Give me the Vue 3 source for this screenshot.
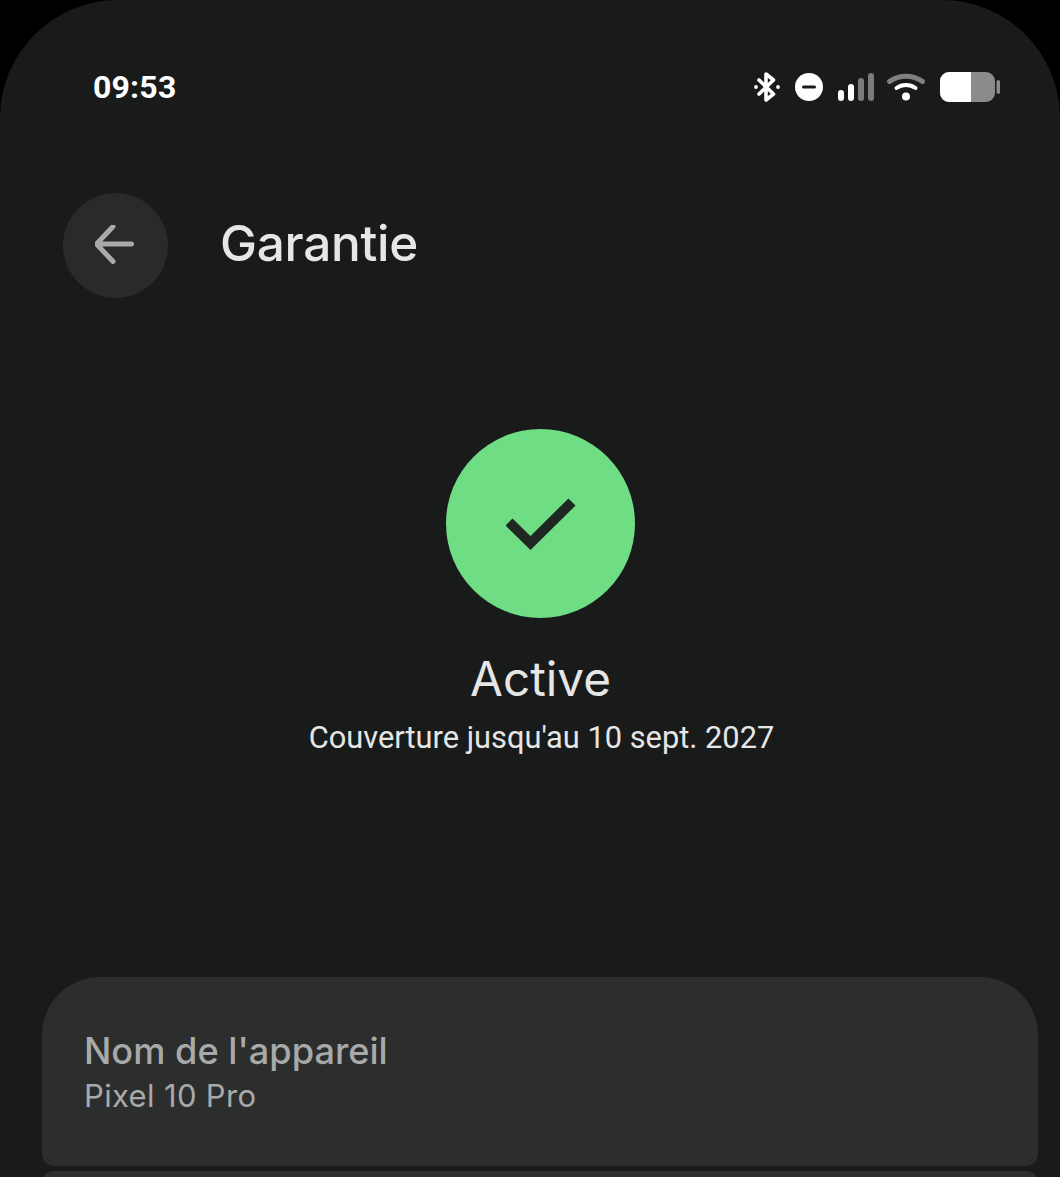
<template>
  <div class="phone">
    <div class="status-bar">
      <span class="time">09:53</span>
      <div class="status-icons">
        <svg class="ic-bt" width="28" height="30" viewBox="0 0 28 30">
          <path d="M5 8 L19.500 22 L12 28 V2 L19.500 8 L5 22" fill="none" stroke="#fff" stroke-width="3.6" stroke-linecap="round" stroke-linejoin="round"/>
          <circle cx="2" cy="15" r="1.9" fill="#fff"/>
          <circle cx="24" cy="15" r="1.9" fill="#fff"/>
        </svg>
        <svg class="ic-dnd" width="28" height="28" viewBox="0 0 28 28">
          <circle cx="14" cy="14" r="14" fill="#fff"/>
          <rect x="7" y="12.5" width="14" height="3" rx="1.5" fill="#191b1b"/>
        </svg>
        <svg class="ic-signal" width="36" height="28" viewBox="0 0 36 28">
          <rect x="0" y="17" width="6" height="11" rx="3" fill="#fff"/>
          <rect x="10" y="11" width="6" height="17" rx="3" fill="#fff"/>
          <rect x="20" y="5" width="6" height="23" rx="3" fill="#7a7b7b"/>
          <rect x="30" y="0" width="6" height="28" rx="3" fill="#7a7b7b"/>
        </svg>
        <svg class="ic-wifi" width="38" height="28" viewBox="0 0 38 28">
          <path d="M2.5 8.5 C12 1.5 26 1.5 35.5 8.5" fill="none" stroke="#7f8080" stroke-width="5" stroke-linecap="round"/>
          <path d="M9.5 15 C15 11 23 11 28.5 15" fill="none" stroke="#fff" stroke-width="4" stroke-linecap="round"/>
          <circle cx="19" cy="23.5" r="4" fill="#fff"/>
        </svg>
        <svg class="ic-batt" width="60" height="30" viewBox="0 0 60 30">
          <rect x="0" y="0" width="55" height="30" rx="9" fill="#8a8b8b"/>
          <path d="M9 0 H31 V30 H9 A9 9 0 0 1 0 21 V9 A9 9 0 0 1 9 0 Z" fill="#fff"/>
          <rect x="56.5" y="8" width="3.5" height="14" rx="1.75" fill="#8a8b8b"/>
        </svg>
      </div>
    </div>

    <header class="top-bar">
      <button class="back-button" aria-label="Retour">
        <svg width="42" height="42" viewBox="1 1 42 42">
          <path d="M37.5 20 H2.5 M19 2.5 L2.5 20 L19 37.5" fill="none" stroke="#a9aaaa" stroke-width="5" stroke-linecap="round" stroke-linejoin="round"/>
        </svg>
      </button>
      <h1 class="title">Garantie</h1>
    </header>

    <section class="state">
      <div class="state-circle">
        <svg width="70" height="53" viewBox="0 0 70 53">
          <path d="M3 25 L24.500 46 L66 5" fill="none" stroke="#1f2722" stroke-width="10"/>
        </svg>
      </div>
      <p class="state-name">Active</p>
      <p class="state-text">Couverture jusqu'au 10 sept. 2027</p>
    </section>

    <div class="cards">
      <div class="card card-first">
        <span class="card-label">Nom de l'appareil</span>
        <span class="card-value">Pixel 10 Pro</span>
      </div>
      <div class="card card-next"></div>
    </div>
  </div>
</template>

<script setup>
</script>

<style>
html, body { margin: 0; background: #000; }
</style>

<style scoped>
.phone { width: 1060px; height: 1177px; overflow: hidden; background: #191b1b; border-radius: 118px 118px 0 0; display: flex; flex-direction: column; font-family: "Inter", "Liberation Sans", sans-serif; }
.status-bar { display: flex; justify-content: space-between; align-items: center; height: 30px; margin-top: 72px; padding: 0 60px 0 93px; }
.time { font-family: "Roboto", sans-serif; font-size: 32px; font-weight: 700; color: #fff; letter-spacing: 0.2px; }
.status-icons { display: flex; align-items: center; }
.ic-bt { margin-right: 13px; }
.ic-dnd { margin-right: 15px; }
.ic-signal { margin-right: 13px; }
.ic-wifi { margin-right: 15px; }
.top-bar { display: flex; align-items: center; gap: 52px; margin-top: 91px; padding-left: 63px; }
.back-button { width: 105px; height: 105px; border: none; border-radius: 50%; background: #292b2b; padding: 0; display: flex; align-items: center; justify-content: center; }
.title { margin: 0 0 5px; font-size: 49.5px; font-weight: 500; color: #e6e6e6; letter-spacing: -0.3px; }
.state { display: flex; flex-direction: column; align-items: center; margin-top: 131px; padding-left: 21px; }
.state-circle { width: 189px; height: 189px; border-radius: 50%; background: #6fdd83; display: flex; align-items: center; justify-content: center; }
.state-name { margin: 33px 0 0; font-size: 47.7px; line-height: 56px; font-weight: 400; color: #e6e6e6; }
.state-text { margin: 11px 0 0 2px; font-family: "Roboto", sans-serif; font-size: 30.8px; line-height: 40px; color: #e6e6e6; }
.cards { display: flex; flex-direction: column; gap: 5px; margin-top: 219px; padding: 0 22px 0 42px; }
.card { background: #2c2e2e; }
.card-first { height: 189px; box-sizing: border-box; border-radius: 58px 58px 12px 12px; padding: 55px 42px 0; display: flex; flex-direction: column; }
.card-next { height: 60px; border-radius: 12px; }
.card-label { font-size: 36.2px; line-height: 38px; font-weight: 500; color: #a8a9a9; }
.card-value { margin-top: 7px; font-size: 31px; line-height: 38px; color: #a8a9a9; letter-spacing: 0.35px; }
</style>
